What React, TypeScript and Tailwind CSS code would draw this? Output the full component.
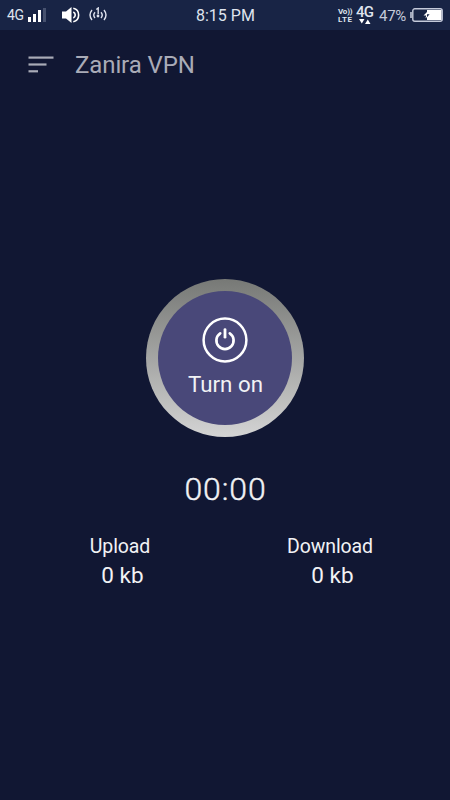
type Stat = { label: string; value: string; className: string };

const stats: Stat[] = [
  { label: 'Upload', value: '0 kb', className: 'ml-[72px] w-[96px]' },
  { label: 'Download', value: '0 kb', className: 'mr-[70px] w-[100px]' },
];

function StatusBar() {
  return (
    <div className="flex h-[30px] items-center bg-[#182445] pl-[7px] pr-[7px] text-[#dfe3ee]">
      <div className="flex w-[189px] shrink-0 items-center">
        <span className="w-[21px] text-[14px] leading-[30px] tracking-[-0.3px]">4G</span>
        <svg className="h-[14px] w-[18px] shrink-0" viewBox="0 0 18 14" fill="#fff">
          <rect x="0" y="9" width="3" height="5" />
          <rect x="5" y="6" width="3" height="8" />
          <rect x="10" y="2" width="3" height="12" />
          <rect x="15" y="0" width="3" height="14" fill="#46516e" />
        </svg>
        <svg className="ml-[16px] h-[16px] w-[18px] shrink-0" viewBox="0 0 18 16">
          <path d="M0 4.5h4l5.5-4.5v16l-5.5-4.5H0z" fill="#fff" />
          <path d="M11.3 5a3.3 3.3 0 0 1 0 6M11.3 1.2a7 7 0 0 1 0 13.6" fill="none" stroke="#fff" strokeWidth="1.6" />
        </svg>
        <svg className="ml-[9px] h-[16px] w-[18px] shrink-0" viewBox="0 0 18 16" fill="none" stroke="currentColor" strokeWidth="1.4">
          <path d="M3 3Q-1 8 3 13M6 5.2Q3.5 8 6 11M15 3Q19 8 15 13M12 5.2Q14.5 8 12 11" />
          <path d="M7.3 2.5L9.2 1V7" />
          <circle cx="9" cy="9" r="1.4" fill="currentColor" stroke="none" />
        </svg>
      </div>

      <span className="w-[60px] pt-[2px] text-[16px] leading-[30px] whitespace-nowrap">8:15 PM</span>

      <div className="ml-auto flex items-center">
        <div className="mt-[2px] flex w-[18px] flex-col text-[8px] leading-[8px] font-bold">
          <span className="h-[8px] tracking-[-0.2px]">Vo))</span>
          <span className="h-[8px] tracking-[0.5px]">LTE</span>
        </div>
        <div className="flex w-[23px] flex-col">
          <span className="text-[15px] leading-[12px] font-medium tracking-[-0.8px]">4G</span>
          <svg className="mt-px ml-[3px] h-[5px] w-[12px]" viewBox="0 0 12 5" fill="#fff">
            <path d="M0 0h5.5L2.8 4.5zM6 5h5.5L8.8.5z" />
          </svg>
        </div>
        <span className="w-[31px] pt-[2px] text-[15px] leading-[30px] tracking-[-0.3px] text-[#c4cada]">47%</span>
        <svg className="h-[14px] w-[33px] shrink-0" viewBox="0 0 33 14">
          <path d="M1 4v6" stroke="#c4cada" strokeWidth="1.6" />
          <rect x="2.8" y="0.8" width="29.4" height="12.4" rx="2" fill="none" stroke="#c4cada" strokeWidth="1.4" />
          <path d="M17 2h14.5v10H17z" fill="#fff" />
          <path d="M17 4L13.5 7.4h2.7l-.7 2.8L17 9z" fill="#fff" />
          <path d="M17 6.2h2.6L17 9.2z" fill="#182445" />
        </svg>
      </div>
    </div>
  );
}

function Header() {
  return (
    <header className="flex h-[70px] items-center pl-[28px] text-[#a9abb7]">
      <svg className="-mt-px h-[17px] w-[26px]" viewBox="0 0 26 17" fill="currentColor">
        <rect x="0.5" y="0.5" width="25" height="2.2" />
        <rect x="0.5" y="7.4" width="18" height="2.2" />
        <rect x="0.5" y="14.2" width="9.5" height="2.2" />
      </svg>
      <h1 className="ml-[21px] text-[24px] leading-[30px] tracking-[-0.1px]">Zanira VPN</h1>
    </header>
  );
}

function PowerButton() {
  return (
    <button className="mt-[178.5px] flex size-[158px] items-center justify-center rounded-full bg-linear-to-b from-[#777976] to-[#d4d4d4]">
      <span className="flex size-[134px] flex-col items-center rounded-full bg-[#494879] pt-[26.5px]">
        <svg className="size-[46px]" viewBox="0 0 46 46" fill="none" stroke="#fff" strokeLinecap="round">
          <circle cx="23" cy="23" r="21.4" strokeWidth="2.5" />
          <path d="M23 12.6v7.6" strokeWidth="2.8" />
          <path d="M18.2 16.3a8.6 8.6 0 1 0 9.6 0" strokeWidth="2.7" />
        </svg>
        <span className="mt-[6px] pl-px text-[22.3px] leading-[30px]">Turn on</span>
      </span>
    </button>
  );
}

export default function App() {
  return (
    <div className="flex h-[800px] w-[450px] flex-col overflow-hidden bg-[#111733] font-['Roboto',sans-serif] text-[#f1f2f5]">
      <StatusBar />
      <Header />
      <main className="flex flex-col items-center">
        <PowerButton />
        <p className="mt-[32.5px] pl-px text-[32px] leading-[40px] font-light tracking-[0.9px] [-webkit-text-stroke:0.4px]">00:00</p>
        <div className="mt-[24px] flex w-full justify-between">
          {stats.map(({ label, value, className }) => (
            <div key={label} className={`flex flex-col items-center ${className}`}>
              <span className="text-[19.5px] leading-[28px] tracking-[-0.1px]">{label}</span>
              <span className="-mt-px pl-[5px] text-[22.5px] leading-[30px]">{value}</span>
            </div>
          ))}
        </div>
      </main>
    </div>
  );
}
